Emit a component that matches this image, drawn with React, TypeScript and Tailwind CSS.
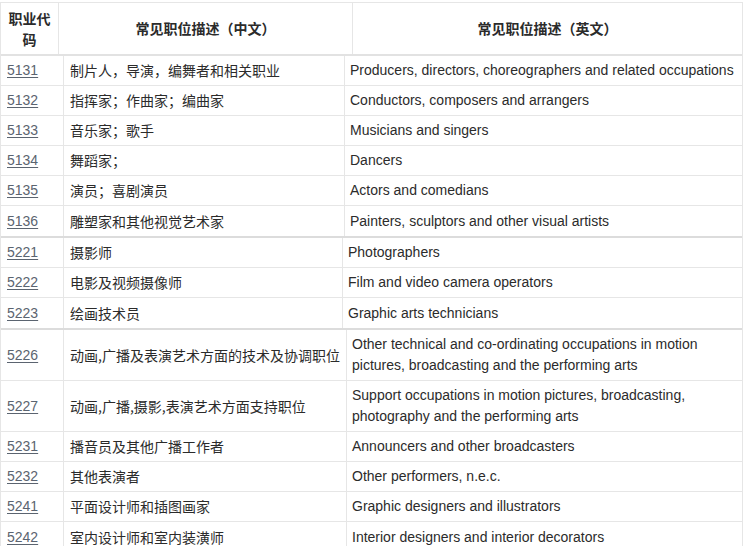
import React from "react";

interface Row {
  code: string;
  zh: string;
  en: string;
  tall?: boolean;
}

const sectionA: Row[] = [
  { code: "5131", zh: "制片人，导演，编舞者和相关职业", en: "Producers, directors, choreographers and related occupations" },
  { code: "5132", zh: "指挥家；作曲家；编曲家", en: "Conductors, composers and arrangers" },
  { code: "5133", zh: "音乐家；歌手", en: "Musicians and singers" },
  { code: "5134", zh: "舞蹈家；", en: "Dancers" },
  { code: "5135", zh: "演员；喜剧演员", en: "Actors and comedians" },
  { code: "5136", zh: "雕塑家和其他视觉艺术家", en: "Painters, sculptors and other visual artists" },
];

const sectionB: Row[] = [
  { code: "5221", zh: "摄影师", en: "Photographers" },
  { code: "5222", zh: "电影及视频摄像师", en: "Film and video camera operators" },
  { code: "5223", zh: "绘画技术员", en: "Graphic arts technicians" },
];

const sectionC: Row[] = [
  {
    code: "5226",
    zh: "动画,广播及表演艺术方面的技术及协调职位",
    en: "Other technical and co-ordinating occupations in motion pictures, broadcasting and the performing arts",
    tall: true,
  },
  {
    code: "5227",
    zh: "动画,广播,摄影,表演艺术方面支持职位",
    en: "Support occupations in motion pictures, broadcasting, photography and the performing arts",
    tall: true,
  },
  { code: "5231", zh: "播音员及其他广播工作者", en: "Announcers and other broadcasters" },
  { code: "5232", zh: "其他表演者", en: "Other performers, n.e.c." },
  { code: "5241", zh: "平面设计师和插图画家", en: "Graphic designers and illustrators" },
  { code: "5242", zh: "室内设计师和室内装潢师", en: "Interior designers and interior decorators" },
];

const cjk = "font-['Noto_Sans_CJK_SC',sans-serif]";
const latin = "font-['Liberation_Sans','Noto_Sans_CJK_SC',sans-serif]";

/** One block of rows; each block in the picture has its own column widths. */
const Section: React.FC<{ rows: Row[]; cols: string; last?: boolean }> = ({ rows, cols, last }) => (
  <div className={last ? "" : "border-b-2 border-[#dcdcdc]"}>
    {rows.map((r, i) => (
      <div
        key={r.code}
        className={`grid ${cols} ${r.tall ? "h-[51px]" : "h-[30px]"} ${
          i < rows.length - 1 ? "border-b border-[#e6e6e6]" : ""
        }`}
      >
        <div className="flex items-center border-r border-[#e6e6e6] pl-[6px]">
          <a href="#" className={`${latin} text-[14px] text-[#5b6470] underline underline-offset-2`}>
            {r.code}
          </a>
        </div>
        <div className={`${cjk} flex items-center border-r border-[#e6e6e6] pl-[6px] text-[14px] text-[#2b2b2b]`}>
          {r.zh}
        </div>
        <div
          className={`${latin} flex items-center pl-[5px] pr-[40px] text-[14px] leading-[21px] text-[#2b2b2b] ${
            r.tall ? "" : "whitespace-nowrap"
          }`}
        >
          {r.en}
        </div>
      </div>
    ))}
  </div>
);

export default function App() {
  return (
    <div className={`w-[746px] h-[546px] overflow-hidden bg-white ${cjk}`}>
      <div className="w-[743px] border-l border-r border-t border-b border-[#e6e6e6] mt-[2px]">
        <div className="grid grid-cols-[58px_294px_1fr] h-[53px] border-b-2 border-[#e2e2e2] font-bold text-[14px] text-[#2b2b2b]">
          <div className="flex items-center justify-center border-r border-[#e6e6e6] px-[6px] text-center leading-[21px]">
            职业代码
          </div>
          <div className="flex items-center justify-center border-r border-[#e6e6e6]">常见职位描述（中文）</div>
          <div className="flex items-center justify-center">常见职位描述（英文）</div>
        </div>
        <Section rows={sectionA} cols="grid-cols-[63px_281px_1fr]" />
        <Section rows={sectionB} cols="grid-cols-[63px_279px_1fr]" />
        <Section rows={sectionC} cols="grid-cols-[63px_283px_1fr]" last />
      </div>
    </div>
  );
}
